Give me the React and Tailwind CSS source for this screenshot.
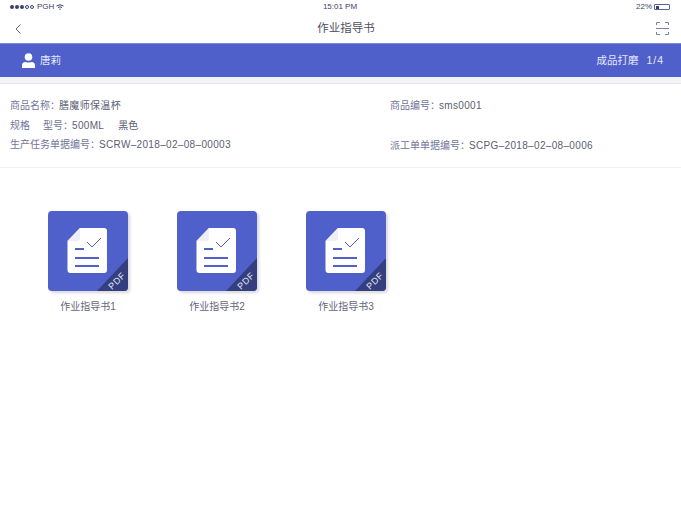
import React from 'react';

const font = { fontFamily: '"Liberation Sans", "Noto Sans CJK SC", sans-serif' };

const PdfIcon = () => (
  <div className="w-20 h-20 rounded-[4px] bg-[#5060cb] overflow-hidden shadow-[2px_2px_3px_rgba(60,60,90,0.2)]">
    <svg width="80" height="80" viewBox="0 0 80 80">
      <path d="M32 17 H56 Q59 17 59 20 V59 Q59 62 56 62 H22.5 Q19.5 62 19.5 59 V30 Z" fill="#fff" />
      <path d="M32 17 V27 Q32 30 29 30 H19.5 Z" fill="#eeeef5" />
      <path d="M39 31 L44 36 L53 27" fill="none" stroke="#5060cb" strokeWidth="1" />
      <rect x="27" y="37" width="9" height="2" fill="#5060cb" />
      <rect x="27" y="46" width="24" height="2" fill="#5060cb" />
      <rect x="27" y="54" width="24" height="2" fill="#5060cb" />
      <path d="M49 80 L80 47 V80 Z" fill="#343f7f" />
      <text x="71" y="72" transform="rotate(-45 71 72)" textAnchor="middle" fontSize="9" fill="#e8e9f4" letterSpacing="0.5" style={font}>PDF</text>
    </svg>
  </div>
);

const Doc = ({ name }) => (
  <div className="w-20 flex flex-col items-center">
    <PdfIcon />
    <div className="mt-[9px] text-[10px] leading-[14px] whitespace-nowrap text-[#64667c]">{name}</div>
  </div>
);

const Field = ({ label, value }) => (
  <div className="whitespace-nowrap">
    <span className="text-[#72759a]">{label}</span>
    <span className="-ml-[1px] tracking-[0.33px] text-[#5c5e72]">{value}</span>
  </div>
);

export default function App() {
  return (
    <div className="w-[681px] h-[511px] bg-white overflow-hidden" style={font}>
      {/* status bar */}
      <div className="h-[14px] pl-[10px] pr-[11px] flex items-center justify-between text-[8px] text-[#3a3f6b]">
        <div className="w-[120px] flex items-center gap-[2px]">
          <div className="flex items-center gap-[1px]">
            <span className="w-[4px] h-[4px] rounded-full bg-[#3a3f6b]" />
            <span className="w-[4px] h-[4px] rounded-full bg-[#3a3f6b]" />
            <span className="w-[4px] h-[4px] rounded-full bg-[#3a3f6b]" />
            <span className="w-[4px] h-[4px] rounded-full border-[0.5px] border-[#3a3f6b]" />
            <span className="w-[4px] h-[4px] rounded-full border-[0.5px] border-[#3a3f6b]" />
          </div>
          <span className="ml-[1px]">PGH</span>
          <svg width="8" height="6" viewBox="0 0 8 6" fill="none" stroke="#3a3f6b" strokeWidth="1">
            <path d="M0.5 2 Q4 -0.5 7.5 2" />
            <path d="M2 3.5 Q4 2 6 3.5" />
            <path d="M3.3 5 L4 5.6 L4.7 5" />
          </svg>
        </div>
        <span>15:01 PM</span>
        <div className="w-[120px] flex items-center justify-end gap-[2px]">
          <span>22%</span>
          <div className="w-[16px] h-[6px] border-[0.5px] border-[#5a5fa0] rounded-[1px] p-[0.5px]">
            <div className="w-[3px] h-full bg-[#3a3f6b]" />
          </div>
        </div>
      </div>

      {/* nav bar */}
      <div className="h-[29px] pl-[15px] pr-[12px] flex items-center justify-between">
        <svg width="6" height="10" viewBox="0 0 6 10" fill="none" stroke="#5f6280" strokeWidth="1">
          <path d="M5.5 0.5 L1 5 L5.5 9.5" />
        </svg>
        <div className="ml-[15px] mt-[1px] text-[11.5px] text-[#4f5163]">作业指导书</div>
        <svg width="13" height="13" viewBox="0 0 13 13" fill="none" stroke="#7d80a8" strokeWidth="1">
          <path d="M0.5 3 V0.5 H4 M9 0.5 H12.5 V3 M0 6.5 H13 M0.5 10 V12.5 H4 M9 12.5 H12.5 V10" />
        </svg>
      </div>

      {/* user band */}
      <div className="h-[34px] pl-[22px] pr-[17px] flex items-center justify-between bg-[#5060cb] border-t border-[#7f8bd9] text-[10.5px] text-[#e6e8f6]">
        <div className="flex items-center gap-[5px]">
          <svg width="13" height="15" viewBox="0 0 13 15" fill="#fff">
            <circle cx="6.5" cy="4" r="3.8" />
            <path d="M0 15 V12.5 Q0 9.3 3.5 9 Q6.5 10.2 9.5 9 Q13 9.3 13 12.5 V15 Z" />
          </svg>
          <span>唐莉</span>
        </div>
        <div className="flex items-center gap-[8px]">
          <span>成品打磨</span>
          <span className="tracking-[1px]">1/4</span>
        </div>
      </div>

      <div className="h-[7px] bg-[#f4f4f6] border-b border-[#e6e6ea]" />

      {/* product info */}
      <div className="h-[84px] pt-[15px] pl-[10px] grid grid-cols-[380px_1fr] border-b border-[#f0f0f2] text-[10px] leading-[14px]">
        <div className="flex flex-col gap-[5.5px]">
          <Field label="商品名称：" value="膳魔师保温杯" />
          <div className="flex">
            <span className="text-[#72759a] w-[33px]">规格</span>
            <Field label="型号：" value="500ML" />
            <span className="ml-[14px] text-[#5c5e72]">黑色</span>
          </div>
          <Field label="生产任务单据编号：" value="SCRW–2018–02–08–00003" />
        </div>
        <div className="flex flex-col justify-between pb-[14px]">
          <Field label="商品编号：" value="sms0001" />
          <Field label="派工单单据编号：" value="SCPG–2018–02–08–0006" />
        </div>
      </div>

      {/* documents */}
      <div className="pt-[43px] pl-[48px] flex gap-[49px]">
        <Doc name="作业指导书1" />
        <Doc name="作业指导书2" />
        <Doc name="作业指导书3" />
      </div>
    </div>
  );
}
